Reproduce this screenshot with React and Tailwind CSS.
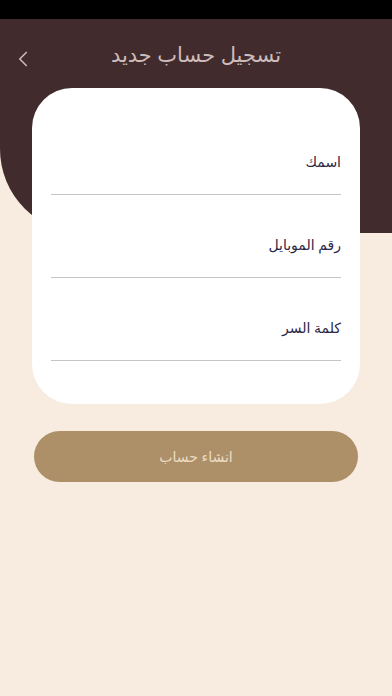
import React from "react";
import { ChevronLeft } from "lucide-react";

const fields = ["اسمك", "رقم الموبايل", "كلمة السر"];

const Field = ({ label, first }) => (
  <div className={first ? "" : "mt-[40px]"}>
    <label className="block text-right text-[14px] leading-[20px] text-[#2b2747]">{label}</label>
    <input
      className="block h-[23px] w-full border-b border-[#c4c4c4] bg-transparent text-right text-[14px] outline-none"
      type={label === "كلمة السر" ? "password" : "text"}
    />
  </div>
);

export default function App() {
  return (
    <div
      className="min-h-[696px] w-full bg-[#f7ecdf]"
      style={{ fontFamily: '"Noto Sans", "DejaVu Sans", sans-serif' }}
    >
      <div className="h-[19px] bg-black" />

      {/* Header */}
      <div className="h-[214px] rounded-bl-[84px] bg-[#412b2c]">
        <div className="relative flex h-[72px] items-center justify-center">
          <button className="absolute left-[10px] top-[27px] text-[#c7b6b6]">
            <ChevronLeft size={26} strokeWidth={1.6} />
          </button>
          <h1 dir="rtl" className="text-[21px] font-normal text-[#cdbcbc]">تسجيل حساب جديد</h1>
        </div>
      </div>

      {/* Form card */}
      <div dir="rtl" className="relative mx-[32px] -mt-[145px] rounded-[40px] bg-white px-[19px] pt-[64px] pb-[43px]">
        {fields.map((f, i) => (
          <Field key={f} label={f} first={i === 0} />
        ))}
      </div>

      <div className="mx-[34px] mt-[27px]">
        <button
          dir="rtl"
          className="flex h-[51px] w-full items-center justify-center rounded-full bg-[#ae9068] text-[14px] text-[#ecdcc6]"
        >
          انشاء حساب
        </button>
      </div>
    </div>
  );
}
